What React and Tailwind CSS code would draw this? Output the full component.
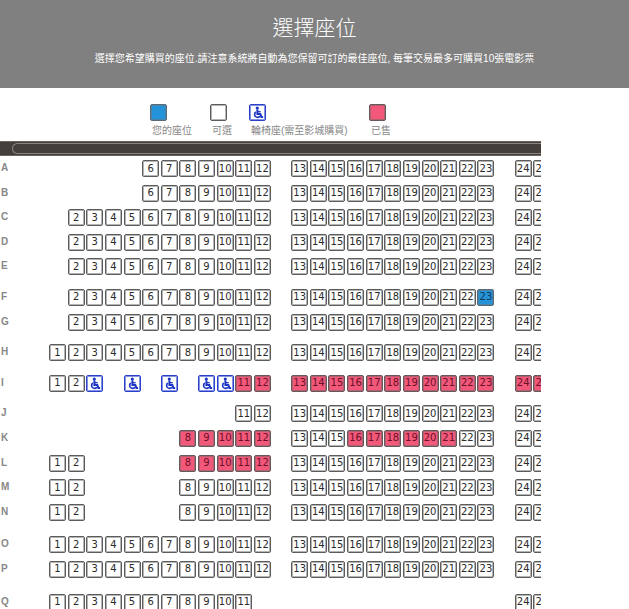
import clsx from 'clsx';

const range = (from, to) => Array.from({ length: to - from + 1 }, (_, i) => from + i);
const RIGHT = [24, 25];
const MIDDLE = range(13, 23);

// Rows are grouped; an aisle runs in front of each group but the first.
const GROUPS = [
  {
    rows: [
      { id: 'A', seats: [...range(6, 12), ...MIDDLE, ...RIGHT] },
      { id: 'B', seats: [...range(6, 12), ...MIDDLE, ...RIGHT] },
      { id: 'C', seats: [...range(2, 12), ...MIDDLE, ...RIGHT] },
      { id: 'D', seats: [...range(2, 12), ...MIDDLE, ...RIGHT] },
      { id: 'E', seats: [...range(2, 12), ...MIDDLE, ...RIGHT] },
    ],
  },
  {
    aisle: 'h-[6px]',
    rows: [
      { id: 'F', seats: [...range(2, 12), ...MIDDLE, ...RIGHT], mine: [23] },
      { id: 'G', seats: [...range(2, 12), ...MIDDLE, ...RIGHT] },
    ],
  },
  {
    aisle: 'h-[6px]',
    rows: [{ id: 'H', seats: [...range(1, 12), ...MIDDLE, ...RIGHT] }],
  },
  {
    aisle: 'h-[6px]',
    rows: [
      {
        id: 'I',
        seats: [1, 2, 3, 5, 7, 9, 10, 11, 12, ...MIDDLE, ...RIGHT],
        wheelchair: [3, 5, 7, 9, 10],
        sold: range(11, 25),
      },
    ],
  },
  {
    aisle: 'h-[6px]',
    rows: [
      { id: 'J', seats: [11, 12, ...MIDDLE, ...RIGHT] },
      { id: 'K', seats: [...range(8, 12), ...MIDDLE, ...RIGHT], sold: [...range(8, 12), ...range(16, 21)] },
      { id: 'L', seats: [1, 2, ...range(8, 12), ...MIDDLE, ...RIGHT], sold: range(8, 12) },
      { id: 'M', seats: [1, 2, ...range(8, 12), ...MIDDLE, ...RIGHT] },
      { id: 'N', seats: [1, 2, ...range(8, 12), ...MIDDLE, ...RIGHT] },
    ],
  },
  {
    aisle: 'h-[8px]',
    rows: [
      { id: 'O', seats: [...range(1, 12), ...MIDDLE, ...RIGHT] },
      { id: 'P', seats: [...range(1, 12), ...MIDDLE, ...RIGHT] },
    ],
  },
  {
    aisle: 'h-[8px]',
    rows: [{ id: 'Q', seats: [...range(1, 11), ...RIGHT] }],
  },
];

// 27 columns: seats 1-12, aisle, seats 13-23, aisle, seats 24-25.
const COLUMNS = [...range(1, 12), null, ...MIDDLE, null, ...RIGHT];

const SEAT = {
  free: 'border-[#5c5c5c] bg-white text-[#2a2a2a] inset-ring-[#b4b4b4]',
  mine: 'border-[#5b6a75] bg-[#2593d9] text-[#123c5c] inset-ring-[#4a83a8]',
  sold: 'border-[#66595c] bg-[#f2587a] text-[#6b1028] inset-ring-[#b0606f]',
  wheelchair: 'border-[#2b41cc] bg-white text-[#1c35c4] inset-ring-[#8492e2]',
};

function Wheelchair() {
  return (
    <svg viewBox="0 0 15 15" className="size-full" fill="none" stroke="currentColor" aria-hidden="true">
      <circle cx="7.3" cy="3.1" r="1.6" fill="currentColor" stroke="none" />
      <path d="M7.4 4.5v4.4h2.9l1.1 3h1.7" strokeWidth="2" />
      <path d="M7.5 6.7h3.2" strokeWidth="1.3" />
      <path d="M5.8 7a3 3 0 1 0 4.2 4.2" strokeWidth="1.6" />
    </svg>
  );
}

function seatKind(row, n) {
  if (row.wheelchair?.includes(n)) return 'wheelchair';
  if (row.sold?.includes(n)) return 'sold';
  if (row.mine?.includes(n)) return 'mine';
  return 'free';
}

function Seat({ row, n }) {
  const kind = seatKind(row, n);
  return (
    <button
      type="button"
      disabled={kind === 'sold'}
      aria-label={`${row.id}${n}`}
      className={clsx(
        'flex size-[17px] items-center justify-center rounded-[2px] border inset-ring-1 text-[10px] leading-none',
        SEAT[kind],
      )}
    >
      {kind === 'wheelchair' ? <Wheelchair /> : n}
    </button>
  );
}

function Row({ row }) {
  return (
    <div className="flex min-h-0 flex-1">
      <div className="w-[49px] shrink-0 pl-px font-['Liberation_Sans',sans-serif] text-[10px] leading-4 font-bold text-[#888888]">
        {row.id}
      </div>
      <div className="grid w-[503px] shrink-0 grid-cols-[repeat(27,minmax(0,1fr))]">
        {COLUMNS.map((n, i) => (
          <div key={i}>{row.seats.includes(n) && <Seat row={row} n={n} />}</div>
        ))}
      </div>
    </div>
  );
}

function LegendItem({ kind, label, className }) {
  return (
    <li className={className}>
      <span className={clsx('block size-[17px] rounded-[2px] border inset-ring-1', SEAT[kind])}>
        {kind === 'wheelchair' && <Wheelchair />}
      </span>
      <span className="block pl-[2px] text-[10px] leading-5 whitespace-nowrap text-[#888888]">{label}</span>
    </li>
  );
}

export default function App() {
  return (
    <div className="flex h-screen flex-col overflow-hidden bg-white font-['Liberation_Sans','Noto_Sans_CJK_TC',sans-serif]">
      <header className="h-[88px] shrink-0 bg-[#808080] pt-3 text-center text-white">
        <h1 className="text-[21px] leading-8 font-light">選擇座位</h1>
        <p className="pt-[5px] text-[10px] leading-5">
          選擇您希望購買的座位.請注意系統將自動為您保留可訂的最佳座位, 每筆交易最多可購買10張電影票
        </p>
      </header>

      <ul className="flex h-[53px] w-[86%] shrink-0 pt-4 pl-[150px]">
        <LegendItem kind="mine" label="您的座位" className="w-[60px]" />
        <LegendItem kind="free" label="可選" className="w-[39px]" />
        <LegendItem kind="wheelchair" label="輪椅座(需至影城購買)" className="w-[120px]" />
        <LegendItem kind="sold" label="已售" />
      </ul>

      <main className="w-[86%] shrink-0 overflow-hidden">
        <div className="h-[15px] overflow-hidden border-y border-[#6a6562] bg-[#443f3b] pt-px pl-3">
          <div className="h-[11px] w-full rounded-l-full border-y border-l border-[#8a8581]" />
        </div>
        <div className="flex h-[462px] flex-col pt-1 font-['DejaVu_Sans',sans-serif]">
          {GROUPS.map(({ aisle, rows }) => [
            aisle && <div key={`aisle-${rows[0].id}`} className={clsx('shrink-0', aisle)} />,
            ...rows.map((row) => <Row key={row.id} row={row} />),
          ])}
        </div>
      </main>
    </div>
  );
}
